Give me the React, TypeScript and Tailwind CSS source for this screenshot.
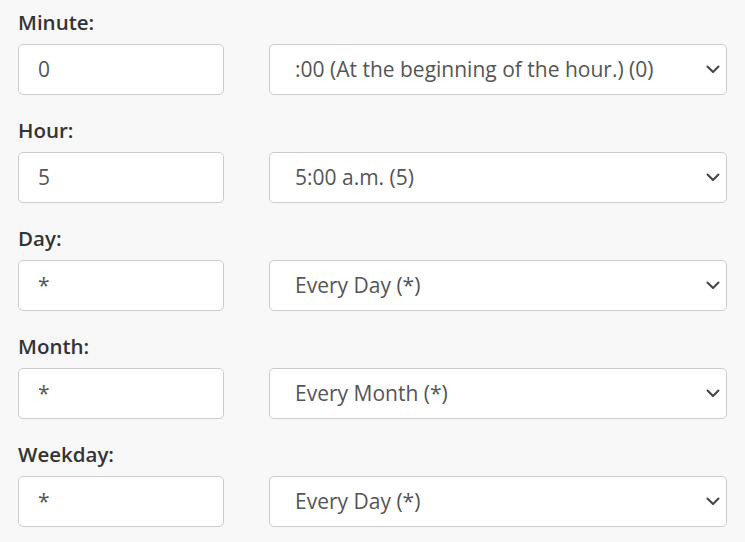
import React from "react";

const rows = [
  { label: "Minute:", value: "0", option: ":00 (At the beginning of the hour.) (0)" },
  { label: "Hour:", value: "5", option: "5:00 a.m. (5)" },
  { label: "Day:", value: "*", option: "Every Day (*)" },
  { label: "Month:", value: "*", option: "Every Month (*)" },
  { label: "Weekday:", value: "*", option: "Every Day (*)" },
];

function Chevron() {
  return (
    <svg width="14" height="9" viewBox="0 0 14 9" fill="none" className="shrink-0">
      <path d="M1.5 1.5 L7 7 L12.5 1.5" stroke="#444" strokeWidth="2" strokeLinecap="round" strokeLinejoin="round" />
    </svg>
  );
}

export default function App() {
  return (
    <div
      className="w-[745px] h-[542px] bg-[#f8f8f8] overflow-hidden pl-[18px] pt-[7px]"
      style={{ fontFamily: '"Open Sans", sans-serif' }}
    >
      {rows.map((r, i) => (
        <div key={i} className="mb-[20px]">
          <div className="h-[30px] leading-[30px] mb-[7px] text-[20.5px] font-semibold text-[#333]">{r.label}</div>
          <div className="flex gap-[45px]">
            <div className="w-[206px] h-[51px] bg-white border border-[#ccc] rounded-[5px] flex items-center pl-[19px] text-[21px] text-[#555]">
              {r.value}
            </div>
            <div className="w-[458px] h-[51px] bg-white border border-[#ccc] rounded-[5px] flex items-center justify-between pl-[25px] pr-[6px] text-[21px] text-[#555]">
              <span>{r.option}</span>
              <Chevron />
            </div>
          </div>
        </div>
      ))}
    </div>
  );
}
